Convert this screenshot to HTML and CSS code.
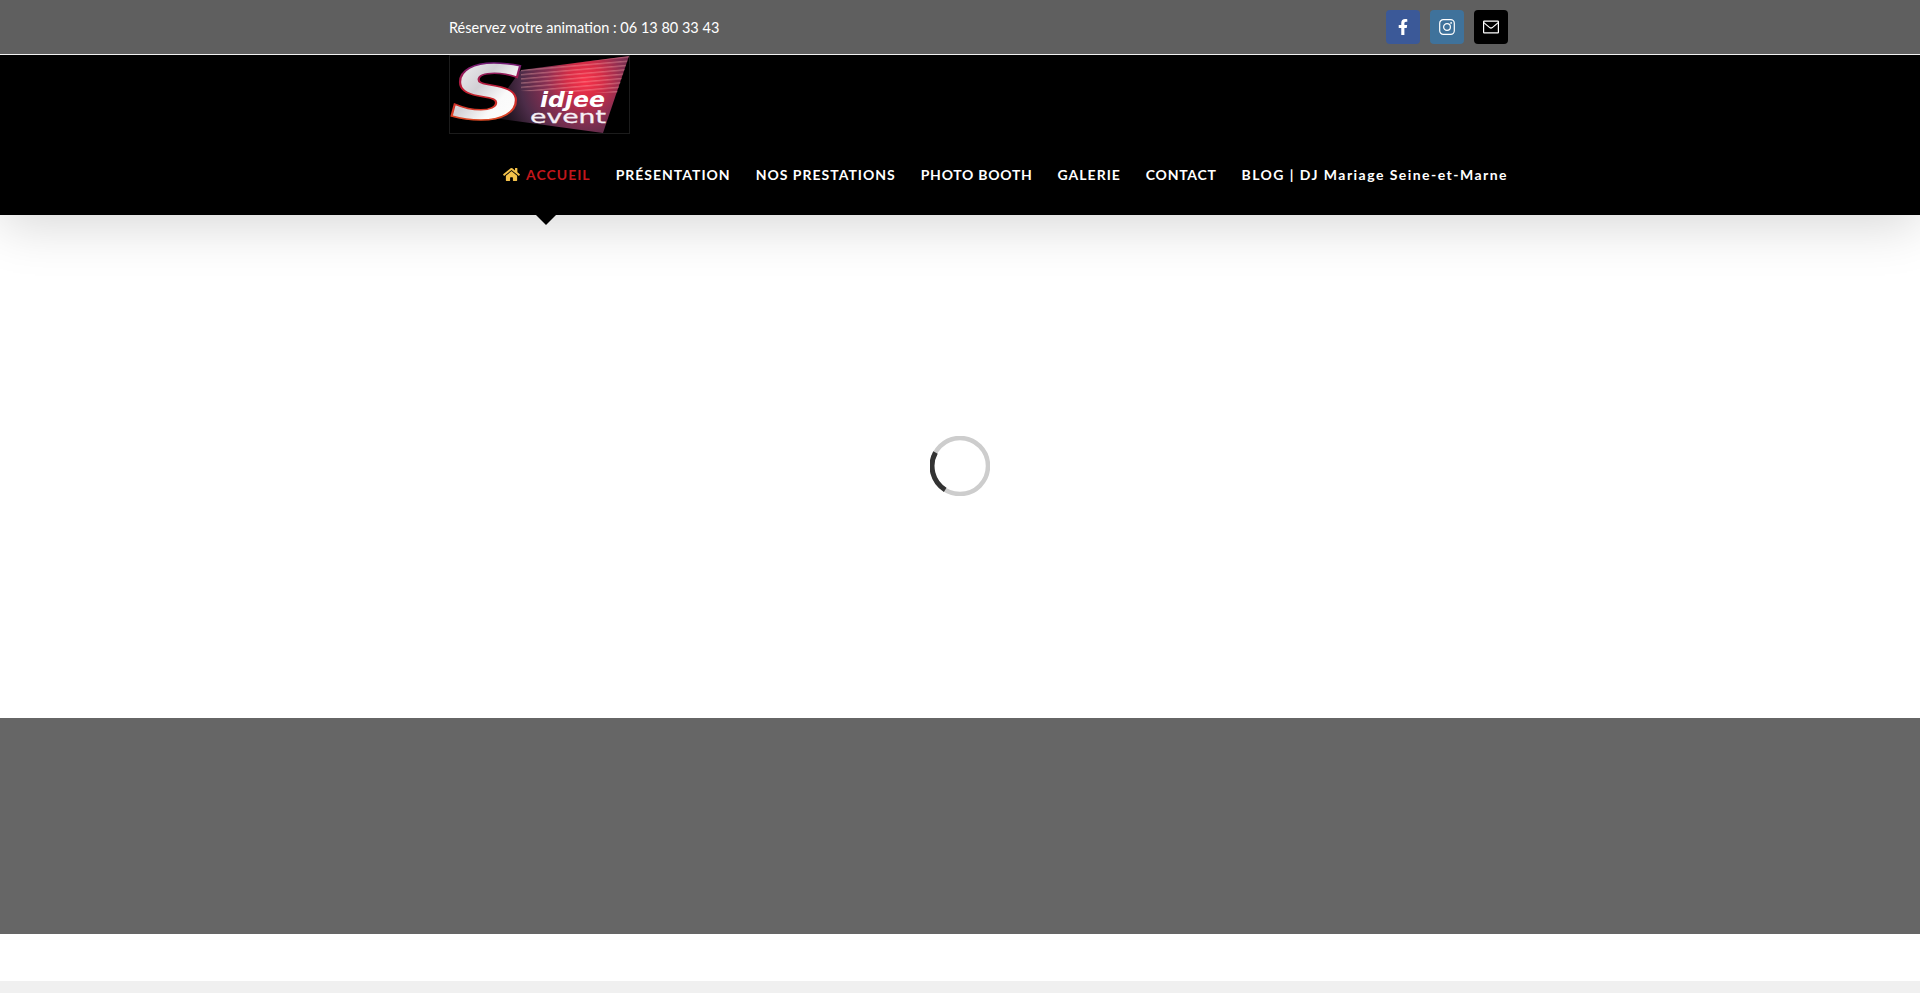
FILE: index.html
```html
<!DOCTYPE html>
<html lang="fr">
<head>
<meta charset="utf-8">
<title>Sidjee Event</title>
<link rel="stylesheet" href="styles.css">
</head>
<body>
<header class="header">
  <div class="topbar">
    <div class="row topbar-row">
      <p class="phone">Réservez votre animation : 06 13 80 33 43</p>
      <div class="socials">
        <a class="social fb" href="#"><svg class="ico-fb" viewBox="0 0 320 512"><path d="M279.14 288l14.22-92.66h-88.91v-60.13c0-25.35 12.42-50.06 52.24-50.06h40.42V6.26S260.43 0 225.36 0c-73.22 0-121.08 44.38-121.08 124.72v70.62H22.89V288h81.39v224h100.17V288z"/></svg></a>
        <a class="social ig" href="#"><svg class="ico-line" viewBox="0 0 16 16"><rect x=".7" y=".7" width="14.6" height="14.6" rx="3.6"/><circle cx="8" cy="8" r="3.4"/><circle class="dot" cx="12.1" cy="3.9" r=".9"/></svg></a>
        <a class="social mail" href="#"><svg class="ico-line" viewBox="0 0 16 16"><rect x=".6" y="2.2" width="14.8" height="11.6" rx=".6"/><path d="M.8 3.6l5.9 5q1.3 1 2.6 0l5.9-5"/></svg></a>
      </div>
    </div>
  </div>
  <div class="mainbar">
    <div class="row logo-row">
      <a class="logo" href="#">
        <svg class="logo-svg" viewBox="0 0 181 79">
          <defs>
            <radialGradient id="beam" gradientUnits="userSpaceOnUse" cx="136" cy="26" r="86">
              <stop offset="0" stop-color="#f8324a"/>
              <stop offset=".2" stop-color="#d62c46"/>
              <stop offset=".45" stop-color="#8a2f52"/>
              <stop offset=".75" stop-color="#4c2c48"/>
              <stop offset="1" stop-color="#1e141f"/>
            </radialGradient>
            <linearGradient id="chrome" x1="0" y1="0" x2="1" y2="1">
              <stop offset="0" stop-color="#ffffff"/>
              <stop offset=".4" stop-color="#d2d0d5"/>
              <stop offset=".62" stop-color="#fafafa"/>
              <stop offset="1" stop-color="#ffffff"/>
            </linearGradient>
            <linearGradient id="rim" x1="0" y1="0" x2="0" y2="1">
              <stop offset="0" stop-color="#4a1fa0"/>
              <stop offset=".45" stop-color="#c01a30"/>
              <stop offset="1" stop-color="#f0641e"/>
            </linearGradient>
            <pattern id="lines" width="4" height="4.2" patternUnits="userSpaceOnUse" patternTransform="rotate(-5)">
              <rect width="4" height="1.4" fill="#ffb0b0" opacity=".36"/>
            </pattern>
          </defs>
          <rect class="logo-frame" x=".5" y=".5" width="180" height="78"/>
          <polygon fill="url(#beam)" points="72,15 180,1 154,78 38,62"/>
          <polygon fill="url(#lines)" points="72,15 180,1 168,38 72,36"/>
          <text class="logo-s" x="1" y="64" textLength="76" lengthAdjust="spacingAndGlyphs">S</text>
          <text class="logo-idjee" x="91" y="52" textLength="65" lengthAdjust="spacingAndGlyphs">idjee</text>
          <text class="logo-event" x="81" y="68" textLength="76" lengthAdjust="spacingAndGlyphs">event</text>
        </svg>
      </a>
    </div>
    <nav class="row nav">
      <a class="nav-item active" href="#"><svg class="ico-home" viewBox="0 0 576 512"><path d="M280.37 148.26L96 300.11V464a16 16 0 0 0 16 16l112.06-.29a16 16 0 0 0 15.92-16V368a16 16 0 0 1 16-16h64a16 16 0 0 1 16 16v95.64a16 16 0 0 0 16 16.05L464 480a16 16 0 0 0 16-16V300L295.67 148.26a12.19 12.19 0 0 0-15.3 0zM571.6 251.47L488 182.56V44.05a12 12 0 0 0-12-12h-56a12 12 0 0 0-12 12v72.61L318.47 43a48 48 0 0 0-61 0L4.34 251.47a12 12 0 0 0-1.6 16.9l25.5 31A12 12 0 0 0 45.15 301l235.22-193.74a12.19 12.19 0 0 1 15.3 0L530.9 301a12 12 0 0 0 16.9-1.6l25.5-31a12 12 0 0 0-1.7-16.93z"/></svg>ACCUEIL</a>
      <a class="nav-item" href="#">PRÉSENTATION</a>
      <a class="nav-item" href="#">NOS PRESTATIONS</a>
      <a class="nav-item tight" href="#">PHOTO BOOTH</a>
      <a class="nav-item" href="#">GALERIE</a>
      <a class="nav-item tight" href="#">CONTACT</a>
      <a class="nav-item wide" href="#">BLOG | DJ Mariage Seine-et-Marne</a>
    </nav>
  </div>
</header>
<main class="content">
  <svg class="spinner" viewBox="0 0 60 60">
    <circle class="track" cx="30" cy="30" r="28"/>
    <path class="arc" d="M5.5 16.5A28 28 0 0 0 15.2 53.8"/>
  </svg>
</main>
<footer class="footer"></footer>
<div class="gap"></div>
<div class="copyright"></div>
</body>
</html>
```
FILE: styles.css
```css
* { box-sizing: border-box; }
html, body { margin: 0; padding: 0; }
body {
  height: 993px;
  overflow: hidden;
  background: #fff;
  font-family: "Lato", "Liberation Sans", sans-serif;
  display: flex;
  flex-direction: column;
}
a { text-decoration: none; color: inherit; }
.row { padding: 0 412px 0 449px; }

.header { position: relative; z-index: 2; flex: none; box-shadow: 0 10px 50px rgba(0,0,0,.16); }
.topbar { height: 55px; background: #5f5f5f; border-bottom: 1px solid #f2f2f2; }
.topbar-row { height: 54px; display: flex; align-items: center; justify-content: space-between; }
.phone { margin: 0; color: #fff; font-size: 14.5px; }
.socials { display: flex; gap: 10px; }
.social { width: 34px; height: 34px; border-radius: 4px; display: flex; align-items: center; justify-content: center; }
.fb { background: #3b5998; }
.ig { background: #3f729b; }
.mail { background: #000; }
.ico-fb { width: 10px; height: 16px; fill: #fff; }
.ico-line { width: 16px; height: 16px; fill: none; stroke: #fff; stroke-width: 1.2; }
.ico-line .dot { fill: #fff; stroke: none; }

.mainbar { height: 160px; background: #000; }
.logo-row { height: 80px; }
.logo { display: block; width: 181px; height: 79px; }
.logo-svg { display: block; width: 181px; height: 79px; overflow: visible; }
.logo-frame { fill: #000; stroke: #1c1c1c; stroke-width: 1; }
.logo-s {
  font-family: "DejaVu Sans", sans-serif;
  font-weight: 700;
  font-style: oblique;
  font-size: 75px;
  fill: url(#chrome);
  stroke: url(#rim);
  stroke-width: 1.6;
}
.logo-idjee {
  font-family: "DejaVu Sans", sans-serif;
  font-weight: 700;
  font-style: oblique;
  font-size: 21px;
  fill: #fff;
}
.logo-event {
  font-family: "DejaVu Sans", sans-serif;
  font-weight: 400;
  font-size: 17px;
  fill: #f6f0f6;
  stroke: #f6f0f6;
  stroke-width: .3;
}

.nav { display: flex; justify-content: flex-end; gap: 25px; height: 80px; padding-top: 29px; }
.nav-item {
  position: relative;
  height: 20px;
  display: flex;
  align-items: center;
  color: #fff;
  font-size: 14px;
  font-weight: 700;
  letter-spacing: 1px;
  white-space: nowrap;
}
.nav-item.tight { letter-spacing: .72px; }
.nav-item.wide { letter-spacing: 1.46px; }
.nav-item.active { color: #c2161b; }
.nav-item.active::after {
  content: "";
  position: absolute;
  left: 33px;
  top: 51px;
  border-left: 10px solid transparent;
  border-right: 10px solid transparent;
  border-top: 10px solid #000;
}
.ico-home { width: 17px; height: 15px; fill: #f2c14a; margin-right: 6px; }

.content { flex: none; height: 503px; padding-bottom: 1px; display: flex; align-items: center; justify-content: center; background: #fff; }
.spinner { width: 60px; height: 60px; fill: none; }
.track { stroke: #cdcdcd; stroke-width: 4.5; }
.arc { stroke: #333; stroke-width: 5; }

.footer { flex: none; height: 216px; background: #666; }
.gap { flex: none; height: 47px; background: #fff; }
.copyright { flex: none; height: 12px; background: #f0f0f0; }
```
